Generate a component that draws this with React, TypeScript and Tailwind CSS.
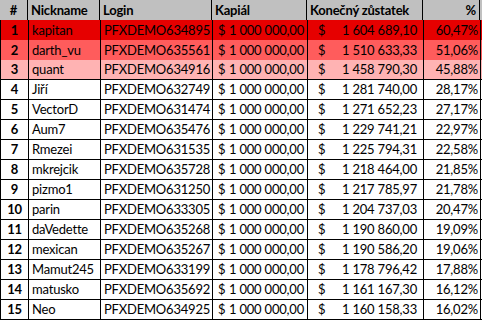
import React from 'react';

const rows = [
  ['1', 'kapitan', 'PFXDEMO634895', '1 604 689,10', '60,47%'],
  ['2', 'darth_vu', 'PFXDEMO635561', '1 510 633,33', '51,06%'],
  ['3', 'quant', 'PFXDEMO634916', '1 458 790,30', '45,88%'],
  ['4', 'Jiří', 'PFXDEMO632749', '1 281 740,00', '28,17%'],
  ['5', 'VectorD', 'PFXDEMO631474', '1 271 652,23', '27,17%'],
  ['6', 'Aum7', 'PFXDEMO635476', '1 229 741,21', '22,97%'],
  ['7', 'Rmezei', 'PFXDEMO631535', '1 225 794,31', '22,58%'],
  ['8', 'mkrejcik', 'PFXDEMO635728', '1 218 464,00', '21,85%'],
  ['9', 'pizmo1', 'PFXDEMO631250', '1 217 785,97', '21,78%'],
  ['10', 'parin', 'PFXDEMO633305', '1 204 737,03', '20,47%'],
  ['11', 'daVedette', 'PFXDEMO635268', '1 190 860,00', '19,09%'],
  ['12', 'mexican', 'PFXDEMO635267', '1 190 586,20', '19,06%'],
  ['13', 'Mamut245', 'PFXDEMO633199', '1 178 796,42', '17,88%'],
  ['14', 'matusko', 'PFXDEMO635692', '1 161 167,30', '16,12%'],
  ['15', 'Neo', 'PFXDEMO634925', '1 160 158,33', '16,02%'],
];

const rowBg = ['bg-[#e60000]', 'bg-[#ff5c5c]', 'bg-[#ffb3b3]'];
const cols = 'grid grid-cols-[28px_72px_112px_95px_116px_57px] h-[20px] items-stretch';
const cell = 'border-r border-black flex items-center leading-none whitespace-nowrap overflow-hidden';

export default function App() {
  return (
    <div className="w-[482px] h-[321px] bg-white text-black text-[13px] tracking-[-0.2px] font-['Lato','Liberation_Sans',sans-serif]">
      <div className={`${cols} bg-[#c0c0c0] font-bold`}>
        <div className={`${cell} justify-center`}>#</div>
        <div className={`${cell} pl-[3px]`}>Nickname</div>
        <div className={`${cell} pl-[3px]`}>Login</div>
        <div className={`${cell} pl-[3px]`}>Kapiál</div>
        <div className={`${cell} pl-[3px]`}>Konečný zůstatek</div>
        <div className={`${cell} justify-end pr-[3px]`}>%</div>
      </div>
      {rows.map((r, i) => (
        <div
          key={r[0]}
          className={`${cols} border-l border-black ${i < 3 ? rowBg[i] : ''} ${i >= 2 ? 'border-b' : ''} border-black`}
        >
          <div className={`${cell} justify-center font-bold`}>{r[0]}</div>
          <div className={`${cell} pl-[3px]`}>{r[1]}</div>
          <div className={`${cell} pl-[3px]`}>{r[2]}</div>
          <div className={`${cell} justify-between pl-[5px] pr-[3px]`}>
            <span>$</span>
            <span>1 000 000,00</span>
          </div>
          <div className={`${cell} justify-between pl-[10px] pr-[6px]`}>
            <span>$</span>
            <span>{r[3]}</span>
          </div>
          <div className={`${cell} justify-end pr-[2px]`}>{r[4]}</div>
        </div>
      ))}
    </div>
  );
}
